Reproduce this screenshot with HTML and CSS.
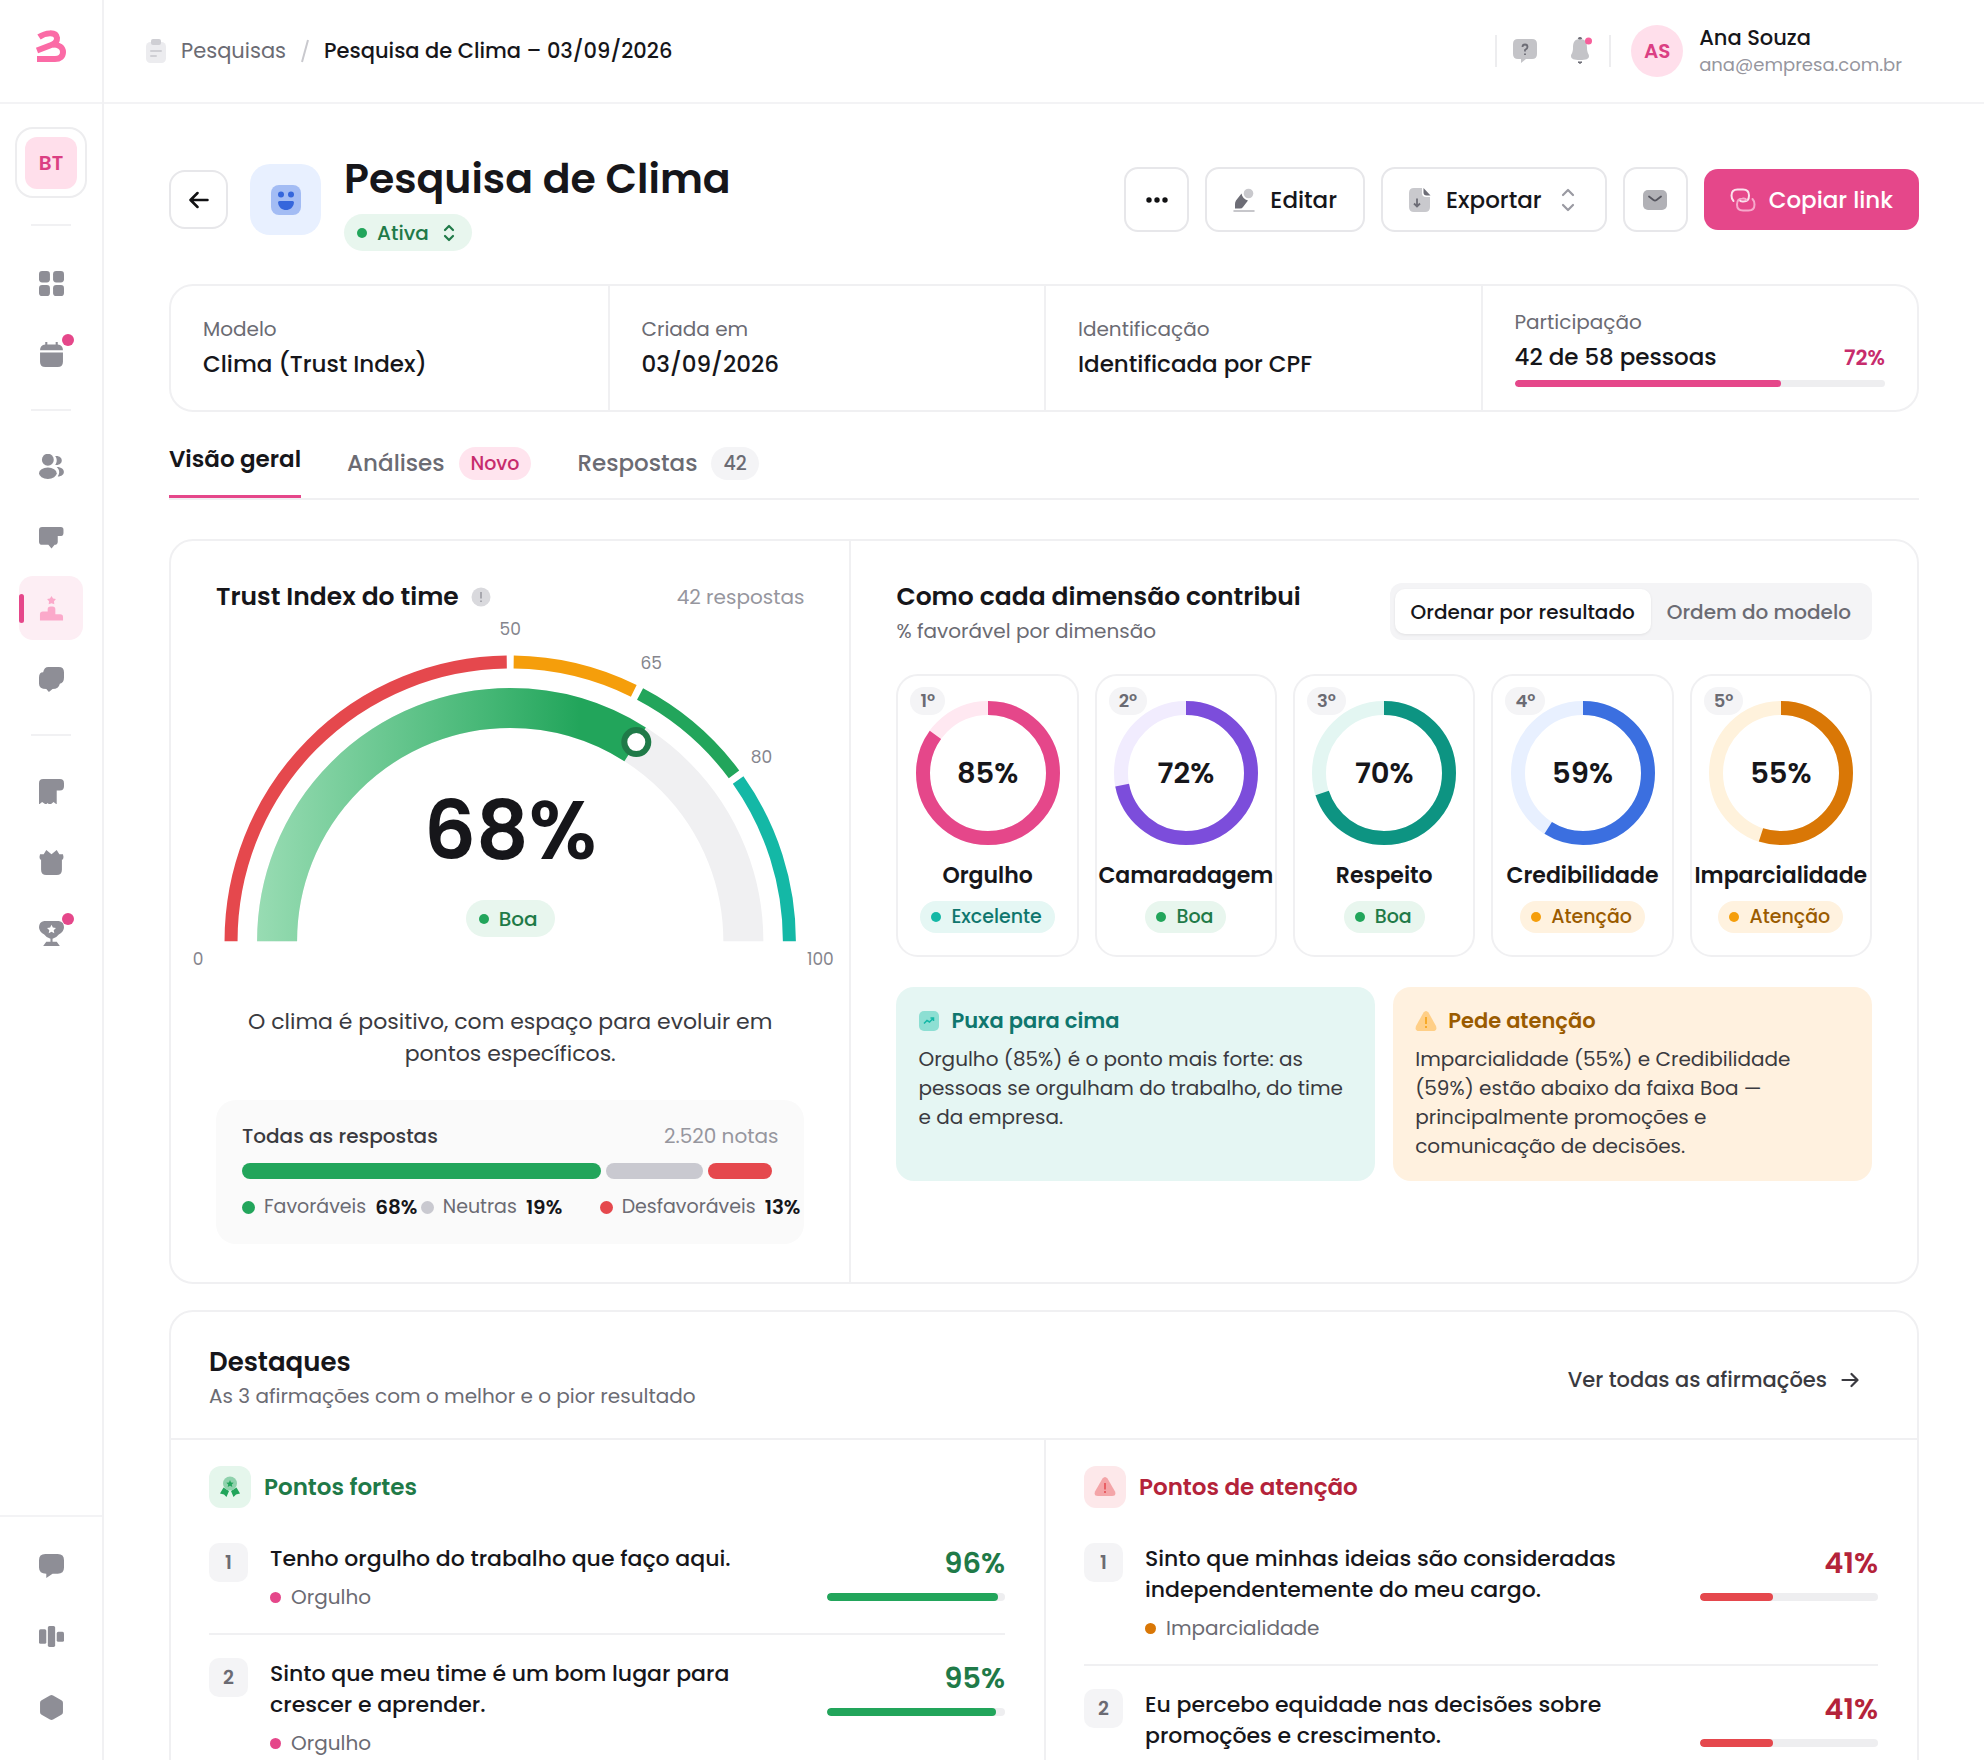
FILE: index.html
```
<!DOCTYPE html>
<html lang="pt-BR">
<head>
    <meta charset="UTF-8">
    <meta name="viewport" content="width=device-width, initial-scale=1.0">
    <title>Pesquisa de Clima</title>
    <link rel="stylesheet" href="styles.css">
</head>
<body>
    <aside class="sidebar">
        <a class="logo" href="#" aria-label="Início">
            <svg width="32" height="34" viewBox="0 0 32 34" fill="none" stroke="#fb6ba6" stroke-width="6" stroke-linejoin="round"><path d="M4 7c6-4 17-6 18 1 .5 5-4 6.500-7 7.500L2 20.500"/><path d="M18 14.500c6 0 10 3 10 7.500 0 4.500-3 7-8 7H2"/></svg>
        </a>
        <nav class="side-nav">
            <button class="company" type="button"><span>BT</span></button>
            <hr class="first">
            <a class="side-link" href="#" aria-label="Painel">
                <svg viewBox="0 0 24 24"><rect width="10.5" height="11" rx="3"/><rect x="13.5" width="10.5" height="11" rx="3"/><rect y="13.5" width="10.5" height="10.5" rx="3"/><rect x="13.5" y="13.5" width="10.5" height="10.5" rx="3"/></svg>
            </a>
            <a class="side-link" href="#" aria-label="Agenda">
                <svg viewBox="0 0 24 24"><path d="M1 8q0-5 5-5.500V0h2v2.500h8V0h2v2.500q5 .5 5 5.500z"/><path d="M1 10h22v9q0 5-5 5H6q-5 0-5-5z"/></svg>
                <i class="alert-dot"></i>
            </a>
            <hr>
            <a class="side-link" href="#" aria-label="Pessoas">
                <svg viewBox="0 0 24 24"><circle cx="8.500" cy="5.500" r="5.700"/><ellipse cx="8.500" cy="18.500" rx="8.500" ry="5.500"/><path d="M15.500 2c8.500-1 8.500 9.500 0 8.500 2-2.500 2-6 0-8.500zM17 12.500c9 0 9 9 1 9 2-3 2-6-1-9z"/></svg>
            </a>
            <a class="side-link" href="#" aria-label="Feedback">
                <svg viewBox="0 0 24 24"><path d="M3 2h18q2.500 0 2.500 2.500V8q0 2.500-2 2.500H18V16q0 3-3 3l-3 3.500L9 19H3q-3 0-3-3V5q0-3 3-3z"/></svg>
            </a>
            <a class="side-link active" href="#" aria-label="Pesquisas">
                <svg viewBox="0 0 24 26"><path d="M12 0l1.600 2.600 3 .6-2 2.300.3 3.200-2.900-1.200-2.900 1.200.3-3.200-2-2.300 3-.6z"/><path d="M8 16v-2q0-3 3-3h2q3 0 3 3v5h5q3 0 3 3v3.500H0V19q0-3 3-3z"/></svg>
            </a>
            <a class="side-link" href="#" aria-label="Conversas">
                <svg viewBox="0 0 24 24"><path d="M9 0h10q5 0 5 5v5q0 5-4 6-1 5-7 5l-3.500 3L7 21q-7 0-7-5v-6q0-5 4-5 1-5 5-5z"/></svg>
            </a>
            <hr>
            <a class="side-link" href="#" aria-label="Recibos">
                <svg viewBox="0 0 24 24"><path d="M4 0h16q4 0 4 4v3q0 4-4 4h-3v13.500L14 22l-3 2.500h-1.500L8.500 23l-2 1.500L3 22 0 24.500V4q0-4 4-4z"/></svg>
            </a>
            <a class="side-link" href="#" aria-label="Benefícios">
                <svg viewBox="0 0 24 24"><path d="M7 0l5 4 5-4 2.500 4H23q1 2.500 0 5h-1v10q0 5-5 5H7q-5 0-5-5V9H1Q0 6.500 1 4h3.500z"/></svg>
            </a>
            <a class="side-link" href="#" aria-label="Conquistas">
                <svg viewBox="0 0 24 24"><path fill-rule="evenodd" d="M5 0h14q5 1 5 6 0 4-5 7-2 3-6 4v3h4l3 4H4l3-4h4v-3q-4-1-6-4-5-3-5-7 0-5 5-6zm7 3.500l-1.300 2.800-3 .4 2.200 2.100-.6 3L12 10.400l2.700 1.400-.6-3 2.200-2.100-3-.4z"/></svg>
                <i class="alert-dot"></i>
            </a>
        </nav>
        <nav class="side-foot">
            <a class="side-link" href="#" aria-label="Suporte">
                <svg viewBox="0 0 24 24"><path d="M6 1h12q6 0 6 6v7q0 6-6 6h-5l-6 4v-4q-7 0-7-6V7q0-6 6-6z"/></svg>
            </a>
            <a class="side-link" href="#" aria-label="Quadros">
                <svg viewBox="0 0 24 24"><rect y="5" width="7" height="14" rx="1.500"/><rect x="8.500" y="2" width="7" height="20" rx="1.500"/><rect x="17" y="7.500" width="7" height="9.500" rx="1.500"/></svg>
            </a>
            <a class="side-link" href="#" aria-label="Configurações">
                <svg viewBox="0 0 24 24"><path d="M10.500.4q1.500-.8 3 0l8 4.600q1.500.8 1.500 2.500v9q0 1.700-1.500 2.500l-8 4.600q-1.500.8-3 0l-8-4.600Q1 18.200 1 16.500v-9Q1 5.800 2.500 5z"/></svg>
            </a>
        </nav>
    </aside>

    <div class="page">
        <header class="topbar">
            <nav class="breadcrumb" aria-label="Caminho">
                <svg width="20" height="24" viewBox="0 0 20 24"><rect y="3" width="20" height="21" rx="4.500" fill="#ececef"/><rect x="5" width="10" height="6" rx="2" fill="#cfcfd4"/><path d="M5 12h10M5 17h5" stroke="#cfcfd4" stroke-width="2" stroke-linecap="round"/></svg>
                <a href="#">Pesquisas</a>
                <svg class="slash" width="8" height="24" viewBox="0 0 8 24"><path d="M7 1L1 23" stroke="#c9c9ce" stroke-width="2"/></svg>
                <span class="current">Pesquisa de Clima – 03/09/2026</span>
            </nav>
            <div class="tools">
                <button class="tool" type="button" aria-label="Ajuda">
                    <svg width="26" height="24" viewBox="0 0 26 24"><path d="M6 0h14q5 0 5 5v10q0 5-5 5h-6l-5 4v-4H6q-5 0-5-5V5q0-5 5-5z" fill="#c4c4c8"/><path d="M10.500 8q0-2.500 2.500-2.500T15.500 8q0 1.500-2.500 3v1.500M13 14.500v1.500" fill="none" stroke="#6d6d76" stroke-width="1.800"/></svg>
                </button>
                <button class="tool" type="button" aria-label="Notificações">
                    <svg width="24" height="28" viewBox="0 0 24 28"><path d="M9 25h4l-2 1.500z" fill="#6d6d76" stroke="#6d6d76"/><path d="M11 2c6 0 7 4 7 9 0 5 2 6 2 8 0 3-3 4-9 4s-9-1-9-4c0-2 2-3 2-8 0-5 1-9 7-9z" fill="#c4c4c8"/><path d="M9.500 2q1.500-2 3 0" fill="none" stroke="#6d6d76" stroke-width="2"/><circle cx="19.500" cy="4" r="3.500" fill="#f75f9b"/></svg>
                </button>
                <span class="avatar">AS</span>
                <div class="user">
                    <strong>Ana Souza</strong>
                    <span>ana@empresa.com.br</span>
                </div>
            </div>
        </header>

        <main>
            <div class="heading">
                <button class="back" type="button" aria-label="Voltar">
                    <svg width="20" height="18" viewBox="0 0 20 18" fill="none" stroke="#111113" stroke-width="2.500" stroke-linecap="round" stroke-linejoin="round"><path d="M18.500 9H2M8.500 2L1.500 9l7 7"/></svg>
                </button>
                <span class="survey-icon">
                    <svg width="30" height="30" viewBox="0 0 30 30"><rect width="30" height="30" rx="8" fill="#a3bcf4"/><g fill="#3566dc"><circle cx="10" cy="9.500" r="3"/><circle cx="20" cy="9.500" r="3"/><path d="M8.500 16h13q1.500 0 1.500 1.500c-1 10-15 10-16 0Q7 16 8.500 16z"/></g></svg>
                </span>
                <div class="title">
                    <h1>Pesquisa de Clima</h1>
                    <button class="badge good status" type="button">Ativa
                        <svg width="12" height="18" viewBox="0 0 12 18" fill="none" stroke="currentColor" stroke-width="2.200" stroke-linecap="round" stroke-linejoin="round"><path d="M2 6l4-4 4 4M2 12l4 4 4-4"/></svg>
                    </button>
                </div>
                <div class="actions">
                    <button class="btn square" type="button" aria-label="Mais opções">
                        <svg width="24" height="6" viewBox="0 0 24 6" fill="#111113"><circle cx="4" cy="3" r="2.700"/><circle cx="12" cy="3" r="2.700"/><circle cx="20" cy="3" r="2.700"/></svg>
                    </button>
                    <button class="btn" type="button">
                        <svg width="22" height="24" viewBox="0 0 22 24"><circle cx="15.500" cy="5.500" r="4.800" fill="#c9c9cd"/><path d="M8.500 5.500q1 5.500 6.500 7L10 19q-1 1.500-3 1.500H2V16q0-2 1-3.500z" fill="#6d6d76"/><path d="M1 23h20" stroke="#b5b5bb" stroke-width="1.500" stroke-linecap="round"/></svg>
                        Editar
                    </button>
                    <button class="btn" type="button">
                        <svg width="22" height="24" viewBox="0 0 22 24"><path d="M5 0h8v5q0 4 4 4h4v10q0 5-5 5H5q-5 0-5-5V5q0-5 5-5z" fill="#c9c9cd"/><path d="M14.500 0L21.500 7.500h-4q-3 0-3-3z" fill="#6d6d76"/><path d="M8 10.500v8M5 15.500l3 3 3-3" fill="none" stroke="#6d6d76" stroke-width="1.800"/></svg>
                        Exportar
                        <svg class="sorter" width="14" height="24" viewBox="0 0 14 24" fill="none" stroke="#9a9aa2" stroke-width="2.200" stroke-linecap="round" stroke-linejoin="round"><path d="M2 7l5-5 5 5M2 17l5 5 5-5"/></svg>
                    </button>
                    <button class="btn square" type="button" aria-label="Enviar por e-mail">
                        <svg width="24" height="20" viewBox="0 0 24 20"><rect width="24" height="20" rx="5" fill="#b1b1b6"/><path d="M6 6.500l4.500 3.500q1.500 1 3 0L18 6.500" fill="none" stroke="#55555e" stroke-width="1.800" stroke-linecap="round"/></svg>
                    </button>
                    <button class="btn primary" type="button">
                        <svg width="26" height="24" viewBox="0 0 26 24" fill="none" stroke-width="2" stroke-linecap="round"><path d="M3.500 13Q1.500 11 1.500 7.500 1.500 1.500 7.500 1.500H13q6 0 6 6t-5.500 6q-3 .5-4-1.500" stroke="#fff" opacity=".85"/><path d="M22.500 11q2 2 2 5.500 0 6-6 6H13q-6 0-6-6t5.500-6q3-.5 4 1.500" stroke="#f7a9cc"/></svg>
                        Copiar link
                    </button>
                </div>
            </div>

            <dl class="info">
                <div><dt>Modelo</dt><dd>Clima (Trust Index)</dd></div>
                <div><dt>Criada em</dt><dd>03/09/2026</dd></div>
                <div><dt>Identificação</dt><dd>Identificada por CPF</dd></div>
                <div>
                    <dt>Participação</dt>
                    <dd class="split">42 de 58 pessoas <b>72%</b></dd>
                    <dd class="meter"><i style="width: 72%"></i></dd>
                </div>
            </dl>

            <nav class="tabs">
                <a class="selected" href="#">Visão geral</a>
                <a href="#">Análises <span class="tag pink">Novo</span></a>
                <a href="#">Respostas <span class="tag">42</span></a>
            </nav>

            <section class="card overview">
                <div class="trust">
                    <div class="trust-head">
                        <h2>Trust Index do time</h2>
                        <svg width="20" height="20" viewBox="0 0 20 20"><circle cx="10" cy="10" r="9.500" fill="#d9d9dd"/><path d="M10 5v6.500M10 13.500v1.500" stroke="#96969e" stroke-width="1.500"/></svg>
                        <span>42 respostas</span>
                    </div>
                    <div class="gauge">
                        <svg viewBox="-340 -335 680 355">
                            <defs>
                                <linearGradient id="fill" gradientUnits="userSpaceOnUse" x1="-253" y1="0" x2="126" y2="0">
                                    <stop offset="0" stop-color="#98dcb3"/>
                                    <stop offset=".62" stop-color="#43b674"/>
                                    <stop offset=".85" stop-color="#22a55b"/>
                                </linearGradient>
                            </defs>
                            <g fill="none" stroke-width="13">
                                <path pathLength="100" stroke="#e5484d" stroke-dasharray="49.6 100" d="M-279 0A279 279 0 0 1 279 0"/>
                                <path pathLength="100" stroke="#f59e0b" stroke-dasharray="0 50.400 14.200 100" d="M-279 0A279 279 0 0 1 279 0"/>
                                <path pathLength="100" stroke="#22a55b" stroke-dasharray="0 65.400 14.200 100" d="M-279 0A279 279 0 0 1 279 0"/>
                                <path pathLength="100" stroke="#14b8a6" stroke-dasharray="0 80.400 19.600 100" d="M-279 0A279 279 0 0 1 279 0"/>
                            </g>
                            <g fill="none" stroke-width="40">
                                <path stroke="#f0f0f2" d="M-233 0A233 233 0 0 1 233 0"/>
                                <path pathLength="100" stroke="url(#fill)" stroke-dasharray="68 100" d="M-233 0A233 233 0 0 1 233 0"/>
                            </g>
                            <circle cx="126" cy="-199" r="12" fill="#fff" stroke="#1f7a48" stroke-width="6"/>
                            <g class="ticks">
                                <text x="0" y="-306">50</text>
                                <text x="141" y="-272">65</text>
                                <text x="251" y="-178">80</text>
                                <text x="-312" y="24">0</text>
                                <text x="310" y="24">100</text>
                            </g>
                        </svg>
                        <div class="gauge-value">
                            <strong>68%</strong>
                            <span class="badge good">Boa</span>
                        </div>
                    </div>
                    <p class="summary">O clima é positivo, com espaço para evoluir em pontos específicos.</p>
                    <div class="answers">
                        <div class="answers-head"><span>Todas as respostas</span><small>2.520 notas</small></div>
                        <div class="stack">
                            <i class="pos" style="width: 67%"></i>
                            <i class="neu" style="width: 18%"></i>
                            <i class="neg" style="width: 12%"></i>
                        </div>
                        <ul class="legend">
                            <li><i class="pos"></i>Favoráveis <b>68%</b></li>
                            <li><i class="neu"></i>Neutras <b>19%</b></li>
                            <li><i class="neg"></i>Desfavoráveis <b>13%</b></li>
                        </ul>
                    </div>
                </div>

                <div class="dimensions">
                    <div class="dim-head">
                        <div>
                            <h2>Como cada dimensão contribui</h2>
                            <p>% favorável por dimensão</p>
                        </div>
                        <div class="switch">
                            <button class="on" type="button">Ordenar por resultado</button>
                            <button type="button">Ordem do modelo</button>
                        </div>
                    </div>
                    <div class="dim-list">
                        <article class="dim pink">
                            <span class="rank">1º</span>
                            <div class="ring">
                                <svg viewBox="0 0 144 144"><circle cx="72" cy="72" r="65"/><circle class="arc" pathLength="100" stroke-dasharray="85 100" cx="72" cy="72" r="65"/></svg>
                                <strong>85%</strong>
                            </div>
                            <h3>Orgulho</h3>
                            <span class="badge great">Excelente</span>
                        </article>
                        <article class="dim purple">
                            <span class="rank">2º</span>
                            <div class="ring">
                                <svg viewBox="0 0 144 144"><circle cx="72" cy="72" r="65"/><circle class="arc" pathLength="100" stroke-dasharray="72 100" cx="72" cy="72" r="65"/></svg>
                                <strong>72%</strong>
                            </div>
                            <h3>Camaradagem</h3>
                            <span class="badge good">Boa</span>
                        </article>
                        <article class="dim teal">
                            <span class="rank">3º</span>
                            <div class="ring">
                                <svg viewBox="0 0 144 144"><circle cx="72" cy="72" r="65"/><circle class="arc" pathLength="100" stroke-dasharray="70 100" cx="72" cy="72" r="65"/></svg>
                                <strong>70%</strong>
                            </div>
                            <h3>Respeito</h3>
                            <span class="badge good">Boa</span>
                        </article>
                        <article class="dim blue">
                            <span class="rank">4º</span>
                            <div class="ring">
                                <svg viewBox="0 0 144 144"><circle cx="72" cy="72" r="65"/><circle class="arc" pathLength="100" stroke-dasharray="59 100" cx="72" cy="72" r="65"/></svg>
                                <strong>59%</strong>
                            </div>
                            <h3>Credibilidade</h3>
                            <span class="badge warn">Atenção</span>
                        </article>
                        <article class="dim orange">
                            <span class="rank">5º</span>
                            <div class="ring">
                                <svg viewBox="0 0 144 144"><circle cx="72" cy="72" r="65"/><circle class="arc" pathLength="100" stroke-dasharray="55 100" cx="72" cy="72" r="65"/></svg>
                                <strong>55%</strong>
                            </div>
                            <h3>Imparcialidade</h3>
                            <span class="badge warn">Atenção</span>
                        </article>
                    </div>
                    <div class="notes">
                        <div class="note up">
                            <h3>
                                <svg width="22" height="22" viewBox="0 0 22 22"><rect x="1" y="1" width="20" height="20" rx="5" fill="#8ddfd3"/><path d="M6 13.500l3-3 2.500 1.500L15.500 8M12.500 8h3v3" fill="none" stroke="#14b8a6" stroke-width="1.500"/></svg>
                                Puxa para cima
                            </h3>
                            <p>Orgulho (85%) é o ponto mais forte: as pessoas se orgulham do trabalho, do time e da empresa.</p>
                        </div>
                        <div class="note down">
                            <h3>
                                <svg width="22" height="22" viewBox="0 0 22 22"><path d="M8.500 2.500q2.500-3 5 0l7.500 13.500q1.500 5-3 5H4q-4.500 0-3-5z" fill="#ffcf87"/><path d="M11 7v7M11 16v2" stroke="#f59e0b" stroke-width="1.500"/></svg>
                                Pede atenção
                            </h3>
                            <p>Imparcialidade (55%) e Credibilidade (59%) estão abaixo da faixa Boa — principalmente promoções e comunicação de decisões.</p>
                        </div>
                    </div>
                </div>
            </section>

            <section class="card highlights">
                <div class="hl-head">
                    <div>
                        <h2>Destaques</h2>
                        <p>As 3 afirmações com o melhor e o pior resultado</p>
                    </div>
                    <a href="#">Ver todas as afirmações
                        <svg width="18" height="16" viewBox="0 0 18 16" fill="none" stroke="currentColor" stroke-width="2.200" stroke-linecap="round" stroke-linejoin="round"><path d="M1.500 8H16M10.500 2l6 6-6 6"/></svg>
                    </a>
                </div>
                <div class="hl-cols">
                    <div class="hl-col strong">
                        <h3>
                            <span class="hl-icon"><svg width="22" height="22" viewBox="0 0 22 22"><path d="M4.500 11.500l5.500 3.500-2.500 6L5 18.500l-4-1zM17.500 11.500L12 15l2.500 6 2.500-2.500 4-1z" fill="#22a55b"/><circle cx="11" cy="7.500" r="7" fill="#90d2ad"/><path d="M11 4l1.100 2.400 2.600.3-1.900 1.800.5 2.600L11 9.800l-2.300 1.300.5-2.600-1.900-1.800 2.600-.3z" fill="#22a55b"/></svg></span>
                            Pontos fortes
                        </h3>
                        <ol>
                            <li>
                                <span class="pos-num">1</span>
                                <div class="claim"><p>Tenho orgulho do trabalho que faço aqui.</p><small class="pink">Orgulho</small></div>
                                <div class="score"><strong>96%</strong><div class="meter"><i style="width: 96%"></i></div></div>
                            </li>
                            <li>
                                <span class="pos-num">2</span>
                                <div class="claim"><p>Sinto que meu time é um bom lugar para crescer e aprender.</p><small class="pink">Orgulho</small></div>
                                <div class="score"><strong>95%</strong><div class="meter"><i style="width: 95%"></i></div></div>
                            </li>
                        </ol>
                    </div>
                    <div class="hl-col weak">
                        <h3>
                            <span class="hl-icon"><svg width="22" height="22" viewBox="0 0 22 22"><path d="M8.500 2.500q2.500-3 5 0l7.500 13q1.500 4.500-3 4.500H4q-4.500 0-3-4.500z" fill="#f4a5a8"/><path d="M11 7v6.500M11 15v2" stroke="#e5484d" stroke-width="1.500"/></svg></span>
                            Pontos de atenção
                        </h3>
                        <ol>
                            <li>
                                <span class="pos-num">1</span>
                                <div class="claim"><p>Sinto que minhas ideias são consideradas independentemente do meu cargo.</p><small class="orange">Imparcialidade</small></div>
                                <div class="score"><strong>41%</strong><div class="meter"><i style="width: 41%"></i></div></div>
                            </li>
                            <li>
                                <span class="pos-num">2</span>
                                <div class="claim"><p>Eu percebo equidade nas decisões sobre promoções e crescimento.</p></div>
                                <div class="score"><strong>41%</strong><div class="meter"><i style="width: 41%"></i></div></div>
                            </li>
                        </ol>
                    </div>
                </div>
            </section>
        </main>
    </div>
</body>
</html>
```
FILE: styles.css
```
* {
    box-sizing: border-box;
}
body {
    margin: 0;
    height: 100vh;
    display: flex;
    overflow: hidden;
    background: #FFFFFF;
    color: #16161A;
    font-family: Poppins, Inter, sans-serif;
    font-size: 20px;
    line-height: 28px;
}
h1, h2, h3, p, dl, dd, ol, ul {
    margin: 0;
    padding: 0;
}
ol, ul {
    list-style: none;
}
a {
    color: inherit;
    text-decoration: none;
}
button {
    font: inherit;
    color: inherit;
    background: none;
    border: none;
    padding: 0;
    cursor: pointer;
}
svg {
    flex: none;
}
h2 {
    font-size: 25px;
    line-height: 32px;
    font-weight: 600;
}

/* sidebar */
.sidebar {
    flex: none;
    width: 104px;
    border-right: 2px solid #F1F1F3;
    display: flex;
    flex-direction: column;
}
.logo {
    height: 104px;
    padding: 30px 0 0 35px;
    border-bottom: 2px solid #F3F3F5;
}
.side-nav, .side-foot {
    display: flex;
    flex-direction: column;
    align-items: center;
    gap: 7px;
}
.side-nav {
    flex: 1;
    padding-top: 23px;
}
.side-foot {
    padding: 16px 0 21px;
    border-top: 2px solid #F3F3F5;
}
.side-nav hr {
    width: 40px;
    margin: 16px 0;
    border: none;
    border-top: 2px solid #F1F1F3;
}
.side-nav .first {
    margin: 19px 0 18px;
}
.company {
    width: 72px;
    height: 71px;
    border: 2px solid #EDEDEF;
    border-radius: 18px;
    display: flex;
    align-items: center;
    justify-content: center;
}
.company span {
    width: 52px;
    height: 52px;
    line-height: 52px;
    border-radius: 12px;
    background: #FFDFEB;
    color: #DB3F83;
    font-weight: 600;
}
.side-link {
    position: relative;
    width: 64px;
    height: 64px;
    border-radius: 14px;
    display: flex;
    align-items: center;
    justify-content: center;
}
.side-link svg {
    width: 25px;
    height: 25px;
    fill: #8E8E96;
}
.side-link.active {
    background: #FDEEF4;
}
.side-link.active svg {
    fill: #FBA9CA;
}
.side-link.active::before {
    content: "";
    position: absolute;
    left: 0;
    top: 18px;
    width: 5px;
    height: 29px;
    border-radius: 3px;
    background: #E5478A;
}
.alert-dot {
    position: absolute;
    right: 9px;
    top: 12px;
    width: 12px;
    height: 12px;
    border-radius: 50%;
    background: #E5478A;
}

/* top bar */
.page {
    flex: 1;
    min-width: 0;
}
.topbar {
    height: 104px;
    border-bottom: 2px solid #F3F3F5;
    padding: 0 82px 0 42px;
    display: flex;
    align-items: center;
    justify-content: space-between;
}
.breadcrumb {
    display: flex;
    align-items: center;
    gap: 15px;
    color: #6B6B73;
    font-size: 21px;
}
.current {
    color: #16161A;
    font-weight: 500;
}
.tools {
    display: flex;
    align-items: center;
}
.tool {
    width: 58px;
    height: 32px;
    display: flex;
    align-items: center;
    justify-content: center;
}
.tool:first-child {
    border-left: 2px solid #EDEDEF;
}
.tool:nth-child(2) {
    border-right: 2px solid #EDEDEF;
}
.avatar {
    width: 52px;
    height: 52px;
    line-height: 52px;
    margin: 0 16px 0 20px;
    border-radius: 50%;
    background: #FFDFEB;
    color: #DB3F83;
    font-weight: 600;
    text-align: center;
}
.user strong {
    display: block;
    font-size: 21px;
    font-weight: 500;
}
.user span {
    display: block;
    color: #96969E;
    font-size: 18px;
    line-height: 26px;
}

/* heading */
main {
    padding: 44px 65px 0;
}
.heading {
    display: flex;
    align-items: center;
}
.back {
    width: 59px;
    height: 59px;
    border: 2px solid #E7E7EA;
    border-radius: 16px;
    display: flex;
    align-items: center;
    justify-content: center;
}
.survey-icon {
    width: 71px;
    height: 71px;
    margin: 0 23px 0 22px;
    border-radius: 20px;
    background: #E8F0FF;
    display: flex;
    align-items: center;
    justify-content: center;
}
.title {
    display: flex;
    flex-direction: column;
    align-items: flex-start;
}
h1 {
    font-size: 41px;
    line-height: 62px;
    font-weight: 600;
    margin-bottom: 4px;
}
.badge {
    display: inline-flex;
    align-items: center;
    gap: 10px;
    height: 37px;
    padding: 0 17px 0 13px;
    border-radius: 19px;
    font-weight: 500;
}
.badge::before {
    content: "";
    width: 10px;
    height: 10px;
    border-radius: 50%;
    background: #22A55B;
}
.badge.good {
    background: #E8F6EE;
    color: #1F7A48;
}
.badge.great {
    background: #E5F7F4;
    color: #0F766E;
}
.badge.great::before {
    background: #14B8A6;
}
.badge.warn {
    background: #FFF2DF;
    color: #9A5B00;
}
.badge.warn::before {
    background: #F59E0B;
}
.status svg {
    margin-left: 4px;
}
.actions {
    margin-left: auto;
    display: flex;
    align-items: center;
    gap: 16px;
}
.btn {
    height: 65px;
    padding: 0 26px;
    border: 2px solid #E7E7EA;
    border-radius: 14px;
    display: flex;
    align-items: center;
    gap: 15px;
    font-size: 23px;
    font-weight: 500;
}
.btn.square {
    width: 65px;
    padding: 0;
    justify-content: center;
}
.btn.primary {
    height: 61px;
    border: none;
    background: #E5478A;
    color: #FFFFFF;
    gap: 13px;
}
.sorter {
    margin: 0 4px;
}

/* info */
.info {
    margin-top: 33px;
    display: grid;
    grid-template-columns: repeat(4, 1fr);
    border: 2px solid #F0F0F2;
    border-radius: 24px;
}
.info > div {
    height: 124px;
    padding: 2px 32px 0;
    display: flex;
    flex-direction: column;
    justify-content: center;
}
.info > div + div {
    border-left: 2px solid #F0F0F2;
}
.info dt {
    color: #6B6B73;
    line-height: 30px;
}
.info dd {
    font-size: 23px;
    line-height: 41px;
    font-weight: 500;
}
.info .split {
    display: flex;
    justify-content: space-between;
}
.split b {
    font-size: 21px;
    font-weight: 600;
    color: #C72C6C;
}
.meter {
    height: 7px;
    border-radius: 4px;
    background: #EEEEF0;
    overflow: hidden;
}
.meter i {
    display: block;
    height: 100%;
    border-radius: 4px;
    background: #E5478A;
}
.info .meter {
    margin: 2px 0 4px;
}

/* tabs */
.tabs {
    margin-top: 22px;
    display: flex;
    gap: 46px;
    border-bottom: 2px solid #F0F0F2;
    font-size: 23px;
    font-weight: 500;
    color: #6B6B73;
}
.tabs a {
    display: flex;
    align-items: center;
    gap: 14px;
    height: 64px;
    padding-bottom: 6px;
}
.tabs .selected {
    padding-bottom: 11px;
    margin-bottom: -1px;
    border-bottom: 3px solid #E5478A;
    color: #16161A;
    font-weight: 600;
}
.tag {
    padding: 0 12px;
    border-radius: 17px;
    background: #F4F4F6;
    font-size: 19px;
    line-height: 33px;
}
.tag.pink {
    background: #FFE4EE;
    color: #C72C6C;
}

.card {
    border: 2px solid #F0F0F2;
    border-radius: 24px;
}

/* overview */
.overview {
    margin-top: 39px;
    display: grid;
    grid-template-columns: 682fr 1068fr;
}
.trust {
    padding: 40px 45px 38px;
    border-right: 2px solid #F0F0F2;
}
.trust-head {
    display: flex;
    align-items: center;
    gap: 12px;
}
.trust-head span {
    margin-left: auto;
    color: #96969E;
}
.gauge {
    position: relative;
    margin: -7px -46px 0;
}
.gauge > svg {
    display: block;
    width: 100%;
    overflow: visible;
}
.ticks text {
    font-size: 17px;
    fill: #85858D;
    text-anchor: middle;
}
.gauge-value {
    position: absolute;
    inset: auto 0 24px;
    text-align: center;
}
.gauge-value strong {
    display: block;
    margin-bottom: 27px;
    font-size: 82px;
    line-height: 84px;
    font-weight: 600;
}
.summary {
    margin: 45px 20px 30px;
    text-align: center;
    color: #3A3A40;
    font-size: 22px;
    line-height: 32px;
}
.answers {
    height: 144px;
    padding: 22px 26px;
    border-radius: 20px;
    background: #FAFAFA;
}
.answers-head {
    display: flex;
    justify-content: space-between;
    color: #3A3A40;
    font-weight: 500;
}
.answers-head small {
    font-size: 20px;
    font-weight: 400;
    color: #96969E;
}
.stack {
    display: flex;
    gap: 5px;
    margin: 13px 0 14px;
}
.stack i {
    height: 16px;
    border-radius: 8px;
}
.pos {
    background: #22A55B;
}
.neu {
    background: #C9C9D0;
}
.neg {
    background: #E5484D;
}
.legend {
    display: grid;
    grid-template-columns: repeat(3, minmax(0, 1fr));
    color: #6B6B73;
}
.legend li {
    display: flex;
    align-items: center;
    gap: 9px;
    font-size: 19px;
    white-space: nowrap;
}
.legend i {
    flex: none;
    width: 13px;
    height: 13px;
    border-radius: 50%;
}
.legend b {
    color: #16161A;
    font-size: 20px;
    font-weight: 600;
}

/* dimensions */
.dimensions {
    padding: 40px 45px 38px;
    min-width: 0;
}
.dim-head {
    display: flex;
    justify-content: space-between;
}
.dim-head p, .hl-head p {
    color: #6B6B73;
    line-height: 36px;
}
.switch {
    height: 57px;
    margin-top: 2px;
    padding: 6px 5px;
    border-radius: 12px;
    background: #F4F4F6;
    display: flex;
    color: #6B6B73;
}
.switch button {
    padding: 0 16px;
    border-radius: 10px;
    font-weight: 500;
}
.switch .on {
    background: #FFFFFF;
    color: #16161A;
    box-shadow: 0 1px 3px rgba(0, 0, 0, 0.08);
}
.dim-list {
    margin-top: 25px;
    display: grid;
    grid-template-columns: repeat(5, minmax(0, 1fr));
    gap: 16px;
}
.dim {
    position: relative;
    height: 283px;
    padding-top: 25px;
    border: 2px solid #F0F0F2;
    border-radius: 22px;
    text-align: center;
}
.rank {
    position: absolute;
    left: 12px;
    top: 11px;
    padding: 0 10px;
    border-radius: 15px;
    background: #F4F4F6;
    color: #6B6B73;
    font-size: 18px;
    font-weight: 600;
}
.ring {
    display: grid;
    place-items: center;
}
.ring svg, .ring strong {
    grid-area: 1 / 1;
}
.ring svg {
    width: 144px;
    transform: rotate(-90deg);
}
.ring circle {
    fill: none;
    stroke-width: 14;
    stroke: var(--soft);
}
.ring .arc {
    stroke: var(--tone);
}
.ring strong {
    font-size: 29px;
    font-weight: 600;
}
.pink {
    --tone: #E5478A;
    --soft: #FFE8F1;
}
.purple {
    --tone: #7C4DDB;
    --soft: #F1ECFE;
}
.teal {
    --tone: #0D9482;
    --soft: #E3F6F2;
}
.blue {
    --tone: #3B6FE0;
    --soft: #E8F0FF;
}
.orange {
    --tone: #D97706;
    --soft: #FFF2DC;
}
.dim h3 {
    display: flex;
    justify-content: center;
    margin: 15px 0 9px;
    font-size: 22px;
    line-height: 32px;
    font-weight: 600;
}
.dim .badge {
    height: 32px;
    padding: 0 13px 0 11px;
    font-size: 19px;
}
.notes {
    margin-top: 30px;
    display: grid;
    grid-template-columns: 1fr 1fr;
    gap: 18px;
}
.note {
    padding: 19px 22px 20px;
    border-radius: 18px;
    line-height: 29px;
    color: #3A3A40;
}
.note h3 {
    display: flex;
    align-items: center;
    gap: 11px;
    margin-bottom: 10px;
    font-size: 21px;
    font-weight: 600;
}
.note.up {
    background: #E5F6F3;
}
.note.up h3 {
    color: #0F766E;
}
.note.down {
    background: #FFF1DF;
}
.note.down h3 {
    color: #9A5B00;
}

/* highlights */
.highlights {
    margin-top: 26px;
}
.hl-head {
    height: 128px;
    padding: 10px 58px 0 38px;
    border-bottom: 2px solid #F0F0F2;
    display: flex;
    align-items: center;
    justify-content: space-between;
}
.hl-head h2 {
    font-size: 26px;
}
.hl-head a {
    display: flex;
    align-items: center;
    gap: 14px;
    font-size: 21px;
    font-weight: 500;
    color: #3A3A40;
}
.hl-cols {
    display: grid;
    grid-template-columns: 1fr 1fr;
}
.hl-col {
    padding: 26px 39px 26px 38px;
}
.hl-col + .hl-col {
    border-left: 2px solid #F0F0F2;
}
.hl-col h3 {
    display: flex;
    align-items: center;
    gap: 13px;
    margin-bottom: 12px;
    font-size: 23px;
    font-weight: 600;
}
.hl-icon {
    width: 42px;
    height: 42px;
    border-radius: 12px;
    display: flex;
    align-items: center;
    justify-content: center;
}
.strong h3, .strong .score {
    color: #1F7A48;
}
.strong .hl-icon {
    background: #E5F6EC;
}
.strong .meter i {
    background: #22A55B;
}
.weak h3, .weak .score {
    color: #B4233A;
}
.weak .hl-icon {
    background: #FDE8EA;
}
.weak .meter i {
    background: #E5484D;
}
.hl-col li {
    display: flex;
    gap: 22px;
    padding: 23px 0 22px;
}
.hl-col li + li {
    border-top: 2px solid #F0F0F2;
}
.pos-num {
    flex: none;
    width: 39px;
    height: 39px;
    border-radius: 10px;
    background: #F4F4F6;
    color: #6B6B73;
    font-size: 19px;
    line-height: 39px;
    font-weight: 600;
    text-align: center;
}
.claim {
    flex: 1;
    min-width: 0;
}
.claim p {
    max-width: 480px;
    font-size: 22px;
    line-height: 31px;
    font-weight: 500;
}
.claim small {
    display: flex;
    align-items: center;
    gap: 10px;
    margin-top: 9px;
    font-size: 20px;
    color: #6B6B73;
}
.claim small::before {
    content: "";
    width: 11px;
    height: 11px;
    border-radius: 50%;
    background: var(--tone);
}
.score {
    width: 178px;
    padding-top: 4px;
    text-align: right;
}
.score strong {
    display: block;
    margin-bottom: 14px;
    font-size: 29px;
    line-height: 32px;
    font-weight: 600;
}
.score .meter {
    height: 8px;
}
```
